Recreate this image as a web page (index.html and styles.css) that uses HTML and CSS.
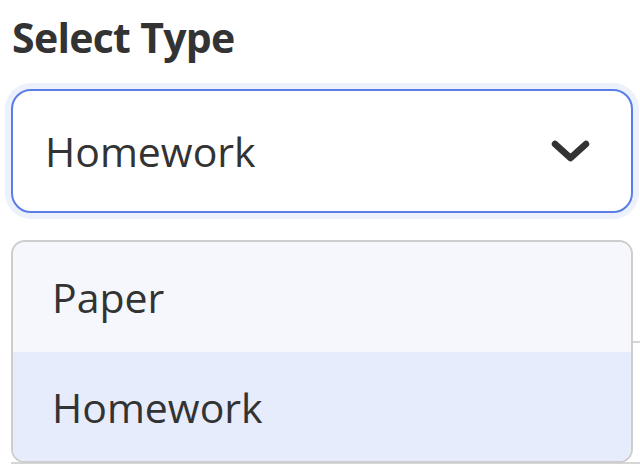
FILE: index.html
```html
<!DOCTYPE html>
<html>
<head>
<meta charset="utf-8">
<link rel="stylesheet" href="styles.css">
</head>
<body>
  <div class="page">
    <div class="label">Select Type</div>
    <div class="field">
      <div class="select">
        <span class="value">Homework</span>
        <svg class="chevron" width="40" height="24" viewBox="0 0 40 24">
          <polyline points="4,5 19.5,19 35,5" fill="none" stroke="#333" stroke-width="6.5" stroke-linecap="round" stroke-linejoin="round"/>
        </svg>
      </div>
      <div class="menu">
        <div class="option hover">Paper</div>
        <div class="option selected">Homework</div>
      </div>
      <div class="under"></div>
    </div>
  </div>
</body>
</html>
```
FILE: styles.css
```css
html, body {
  margin: 0;
  padding: 0;
  background: #ffffff;
}
body {
  font-family: "Open Sans", "Noto Sans", sans-serif;
  color: #333333;
  width: 640px;
  height: 475px;
  overflow: hidden;
}
.page {
  padding: 9px 7px 0 11px;
}
.label {
  font-weight: 700;
  font-size: 41px;
  line-height: 56px;
  letter-spacing: -0.7px;
  padding-left: 1px;
  margin-bottom: 24px;
}
.field {
  position: relative;
}
.select {
  box-sizing: border-box;
  width: 622px;
  height: 124px;
  border: 2px solid #5a7de8;
  border-radius: 20px;
  box-shadow: 0 0 0 6px #edf1fc;
  display: flex;
  align-items: center;
  justify-content: space-between;
  padding: 0 40px 0 32px;
  background: #ffffff;
}
.value {
  font-size: 41px;
  line-height: 56px;
}
.chevron {
  display: block;
}
.under {
  margin-top: 128px;
  margin-right: -7px;
  height: 119px;
  border-top: 2px solid #d6d6d6;
  border-bottom: 2px solid #d6d6d6;
}
.menu {
  position: absolute;
  left: 0;
  top: 151px;
  box-sizing: border-box;
  width: 622px;
  border: 2px solid #cdcdcd;
  border-radius: 14px;
  overflow: hidden;
  background: #ffffff;
  z-index: 2;
}
.option {
  height: 110px;
  display: flex;
  align-items: center;
  padding-left: 39px;
  font-size: 41px;
  line-height: 56px;
}
.option.hover {
  background: #f5f7fd;
}
.option.selected {
  height: 109px;
  background: #e6ecfb;
}
```
